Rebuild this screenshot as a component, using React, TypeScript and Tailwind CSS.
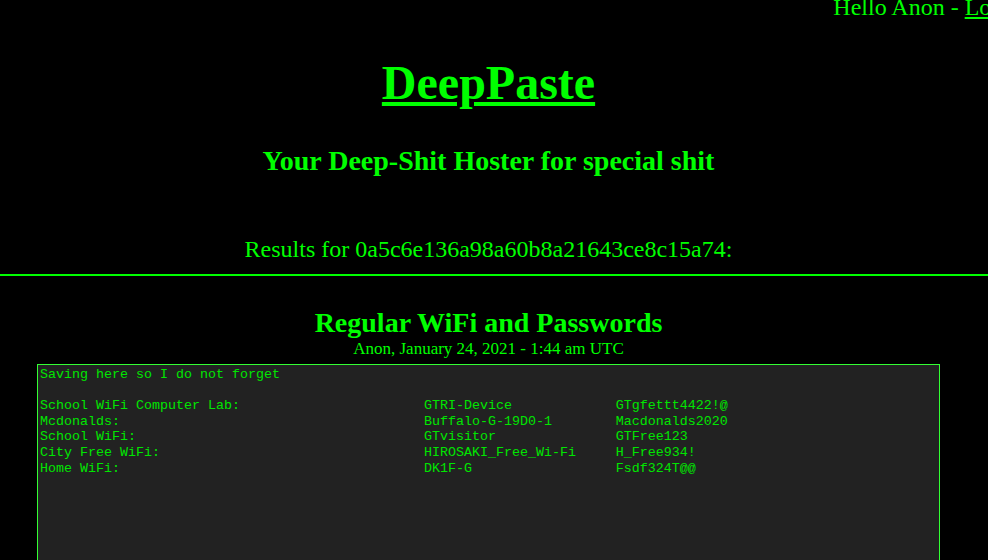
const rows: [string, string, string][] = [
  ["School WiFi Computer Lab:", "GTRI-Device", "GTgfettt4422!@"],
  ["Mcdonalds:", "Buffalo-G-19D0-1", "Macdonalds2020"],
  ["School WiFi:", "GTvisitor", "GTFree123"],
  ["City Free WiFi:", "HIROSAKI_Free_Wi-Fi", "H_Free934!"],
  ["Home WiFi:", "DK1F-G", "Fsdf324T@@"],
];

const pasteText =
  "Saving here so I do not forget\n\n" +
  rows.map(([a, b, c]) => a.padEnd(48) + b.padEnd(24) + c).join("\n");

export default function App() {
  return (
    <div className="h-[560px] w-[988px] overflow-hidden bg-black text-[#00ff00] font-['Liberation_Serif',serif]">
      <div className="flex justify-end whitespace-nowrap text-[24px] leading-[14px] h-[14px]">
        <span className="mr-[-46px]">
          Hello Anon - <a href="#" className="underline">Logout</a>
        </span>
      </div>

      <div className="pr-[11px] text-center">
        <h1 className="mt-[41px] text-[48px] leading-[56px] font-bold">
          <a href="#" className="underline">DeepPaste</a>
        </h1>

        <h2 className="mt-[34px] text-[28px] leading-[32px] font-bold">
          Your Deep-Shit Hoster for special shit
        </h2>

        <p className="mt-[58px] text-[24px] leading-[28px]">
          Results for 0a5c6e136a98a60b8a21643ce8c15a74:
        </p>
      </div>

      <div className="mt-[11px] h-[2px] bg-[#00ff00]" />

      <div className="pr-[11px] text-center">
        <h3 className="mt-[31px] text-[28px] leading-[32px] font-bold">
          Regular WiFi and Passwords
        </h3>
        <div className="text-[17px] leading-[20px]">
          Anon, January 24, 2021 - 1:44 am UTC
        </div>
      </div>

      <div className="mt-[5px] ml-[37px] w-[903px] h-[400px] border border-[#33ff33] bg-[#222222] px-[2px] pt-[2px] whitespace-pre font-['Liberation_Mono',monospace] text-[13.33px] leading-[15.6px] text-[#00e600]">
        {pasteText}
      </div>
    </div>
  );
}
